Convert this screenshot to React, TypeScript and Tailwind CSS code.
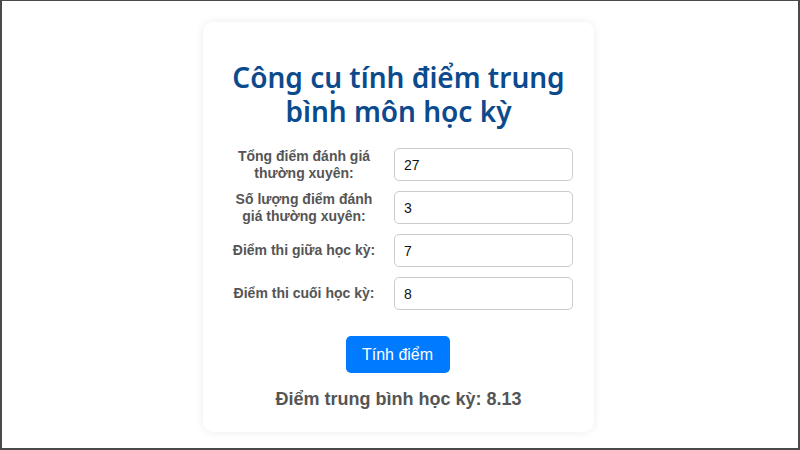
import React, { useState } from "react";

const fields = [
  { label: "Tổng điểm đánh giá thường xuyên:", value: "27" },
  { label: "Số lượng điểm đánh giá thường xuyên:", value: "3" },
  { label: "Điểm thi giữa học kỳ:", value: "7" },
  { label: "Điểm thi cuối học kỳ:", value: "8" },
];

export default function App() {
  const [values, setValues] = useState(fields.map((f) => f.value));

  return (
    <div className="w-[800px] h-[450px] bg-white border-t border-l-2 border-r-2 border-b-2 border-[#4a4a4a] flex justify-center pt-[21px] pr-[3px] box-border overflow-hidden">
      <div className="w-[391px] h-[410px] bg-white rounded-[10px] shadow-[0_0_10px_rgba(0,0,0,0.08)] flex flex-col items-center pt-[38px]">
        <h1
          className="text-[28px] leading-[34px] font-semibold text-[#0b4a8c] text-center w-[340px]"
          style={{ fontFamily: "'Noto Sans', sans-serif" }}
        >
          Công cụ tính điểm trung bình môn học kỳ
        </h1>

        <div className="mt-[20px] ml-[5px] flex flex-col gap-[10px]" style={{ fontFamily: "'Liberation Sans', Arial, sans-serif" }}>
          {fields.map((f, i) => (
            <div key={i} className="flex items-center h-[33px]">
              <label className="w-[150px] text-center text-[14px] leading-[17px] font-bold text-[#555]">
                {f.label}
              </label>
              <input
                className="ml-[15px] w-[179px] h-[33px] rounded-[5px] border border-[#ccc] pl-[9px] text-[14px] text-[#111] outline-none"
                value={values[i]}
                onChange={(e) => {
                  const next = [...values];
                  next[i] = e.target.value;
                  setValues(next);
                }}
              />
            </div>
          ))}
        </div>

        <button
          className="mt-[26px] mr-[2px] w-[104px] h-[37px] rounded-[5px] bg-[#007bff] text-white text-[16px]"
          style={{ fontFamily: "'Liberation Sans', Arial, sans-serif" }}
        >
          Tính điểm
        </button>

        <p
          className="mt-[15px] text-[18px] leading-[22px] font-bold text-[#555]"
          style={{ fontFamily: "'Liberation Sans', Arial, sans-serif" }}
        >
          Điểm trung bình học kỳ: 8.13
        </p>
      </div>
    </div>
  );
}
